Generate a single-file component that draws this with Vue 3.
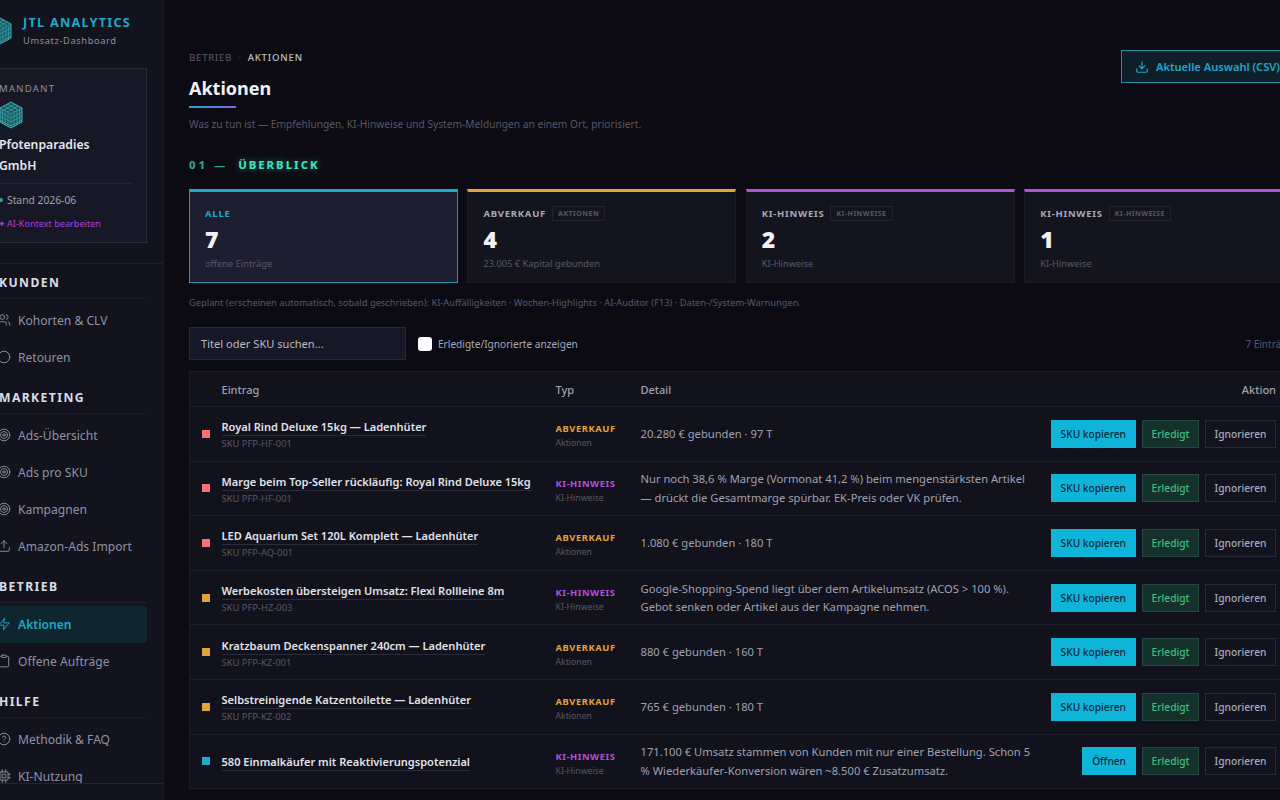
<script setup>
const groups = [
  { label: 'KUNDEN', items: [{ t: 'Kohorten & CLV', i: 'users' }, { t: 'Retouren', i: 'return' }] },
  { label: 'MARKETING', items: [{ t: 'Ads-Übersicht', i: 'target' }, { t: 'Ads pro SKU', i: 'target' }, { t: 'Kampagnen', i: 'target' }, { t: 'Amazon-Ads Import', i: 'upload' }] },
  { label: 'BETRIEB', items: [{ t: 'Aktionen', i: 'zap', active: true }, { t: 'Offene Aufträge', i: 'clip' }] },
  { label: 'HILFE', items: [{ t: 'Methodik & FAQ', i: 'help' }, { t: 'KI-Nutzung', i: 'cpu' }] },
]
const cards = [
  { label: 'ALLE', n: 7, sub: 'offene Einträge', cls: 'c-all' },
  { label: 'ABVERKAUF', tag: 'AKTIONEN', n: 4, sub: '23.005 € Kapital gebunden', cls: 'c-amber' },
  { label: 'KI-HINWEIS', tag: 'KI-HINWEISE', n: 2, sub: 'KI-Hinweise', cls: 'c-purple' },
  { label: 'KI-HINWEIS', tag: 'KI-HINWEISE', n: 1, sub: 'KI-Hinweise', cls: 'c-purple' },
]
const rows = [
  { dot: 'red', title: 'Royal Rind Deluxe 15kg — Ladenhüter', sku: 'SKU PFP-HF-001', type: 'ABVERKAUF', sub: 'Aktionen', detail: '20.280 € gebunden · 97 T', btn: 'SKU kopieren' },
  { dot: 'red', title: 'Marge beim Top-Seller rückläufig: Royal Rind Deluxe 15kg', sku: 'SKU PFP-HF-001', type: 'KI-HINWEIS', sub: 'KI-Hinweise', detail: 'Nur noch 38,6 % Marge (Vormonat 41,2 %) beim mengenstärksten Artikel — drückt die Gesamtmarge spürbar. EK-Preis oder VK prüfen.', btn: 'SKU kopieren' },
  { dot: 'red', title: 'LED Aquarium Set 120L Komplett — Ladenhüter', sku: 'SKU PFP-AQ-001', type: 'ABVERKAUF', sub: 'Aktionen', detail: '1.080 € gebunden · 180 T', btn: 'SKU kopieren' },
  { dot: 'amber', title: 'Werbekosten übersteigen Umsatz: Flexi Rollleine 8m', sku: 'SKU PFP-HZ-003', type: 'KI-HINWEIS', sub: 'KI-Hinweise', detail: 'Google-Shopping-Spend liegt über dem Artikelumsatz (ACOS > 100 %). Gebot senken oder Artikel aus der Kampagne nehmen.', btn: 'SKU kopieren' },
  { dot: 'amber', title: 'Kratzbaum Deckenspanner 240cm — Ladenhüter', sku: 'SKU PFP-KZ-001', type: 'ABVERKAUF', sub: 'Aktionen', detail: '880 € gebunden · 160 T', btn: 'SKU kopieren' },
  { dot: 'amber', title: 'Selbstreinigende Katzentoilette — Ladenhüter', sku: 'SKU PFP-KZ-002', type: 'ABVERKAUF', sub: 'Aktionen', detail: '765 € gebunden · 180 T', btn: 'SKU kopieren' },
  { dot: 'blue', title: '580 Einmalkäufer mit Reaktivierungspotenzial', sku: '', type: 'KI-HINWEIS', sub: 'KI-Hinweise', detail: '171.100 € Umsatz stammen von Kunden mit nur einer Bestellung. Schon 5 % Wiederkäufer-Konversion wären ~8.500 € Zusatzumsatz.', btn: 'Öffnen' },
]
</script>

<template>
  <div class="viewport">
    <div class="shell">
      <aside class="side">
        <div class="brand">
          <svg class="cube big" viewBox="0 0 24 28" fill="none" stroke="#3fb4b8" stroke-width="1">
            <path d="M12 1 23 7v14l-11 6-11-6V7z" fill="#1b5a63" />
            <path d="M1 7l11 6 11-6M12 13v14M3.500 8.500v14M6 10v14M9 11.500v14M15 11.500v14M18 10v14M20.500 8.500v14M1 11l11 6 11-6M1 15l11 6 11-6M1 19l11 6 11-6M5 5l11 6M8 3l11 6M19 5 8 11M16 3 5 9" stroke-width=".6" />
          </svg>
          <div>
            <div class="brand-t">JTL ANALYTICS</div>
            <div class="brand-s">Umsatz-Dashboard</div>
          </div>
        </div>
        <div class="tenant">
          <div class="tenant-l">MANDANT</div>
          <svg class="cube" viewBox="0 0 24 28" fill="none" stroke="#3fb4b8" stroke-width="1">
            <path d="M12 1 23 7v14l-11 6-11-6V7z" fill="#1b5a63" />
            <path d="M1 7l11 6 11-6M12 13v14M3.500 8.500v14M6 10v14M9 11.500v14M15 11.500v14M18 10v14M20.500 8.500v14M1 11l11 6 11-6M1 15l11 6 11-6M1 19l11 6 11-6M5 5l11 6M8 3l11 6M19 5 8 11M16 3 5 9" stroke-width=".6" />
          </svg>
          <div class="tenant-n">Pfotenparadies GmbH</div>
          <div class="tenant-hr"></div>
          <div class="tenant-st"><i class="pip"></i>Stand 2026-06</div>
          <div class="tenant-ai"><span class="spark">✦</span>AI-Kontext bearbeiten</div>
        </div>
        <div class="side-hr"></div>
        <nav class="nav">
          <section v-for="g in groups" :key="g.label" class="group">
            <div class="group-l">{{ g.label }}</div>
            <a v-for="it in g.items" :key="it.t" class="item" :class="{ active: it.active }">
              <svg class="ico" viewBox="0 0 24 24" fill="none" stroke="currentColor" stroke-width="1.6" stroke-linecap="round" stroke-linejoin="round">
                <template v-if="it.i === 'users'"><path d="M16 21v-2a4 4 0 0 0-4-4H6a4 4 0 0 0-4 4v2" /><circle cx="9" cy="7" r="4" /><path d="M22 21v-2a4 4 0 0 0-3-3.900M16 3.100a4 4 0 0 1 0 7.800" /></template>
                <template v-else-if="it.i === 'return'"><circle cx="12" cy="12" r="10" /></template>
                <template v-else-if="it.i === 'target'"><circle cx="12" cy="12" r="10" /><circle cx="12" cy="12" r="6" /><circle cx="12" cy="12" r="2" /></template>
                <template v-else-if="it.i === 'upload'"><path d="M21 15v4a2 2 0 0 1-2 2H5a2 2 0 0 1-2-2v-4M17 8l-5-5-5 5M12 3v12" /></template>
                <template v-else-if="it.i === 'zap'"><path d="M13 2 3 14h9l-1 8 10-12h-9z" /></template>
                <template v-else-if="it.i === 'clip'"><rect x="8" y="2" width="8" height="4" rx="1" /><path d="M16 4h2a2 2 0 0 1 2 2v14a2 2 0 0 1-2 2H6a2 2 0 0 1-2-2V6a2 2 0 0 1 2-2h2" /></template>
                <template v-else-if="it.i === 'help'"><circle cx="12" cy="12" r="10" /><path d="M9.100 9a3 3 0 0 1 5.800 1c0 2-3 3-3 3M12 17h.01" /></template>
                <template v-else><rect x="5" y="5" width="14" height="14" rx="2" /><rect x="9" y="9" width="6" height="6" /><path d="M9 1v4M15 1v4M9 19v4M15 19v4M19 9h4M19 15h4M1 9h4M1 15h4" /></template>
              </svg>
              <span>{{ it.t }}</span>
            </a>
          </section>
        </nav>
        <div class="side-foot"></div>
      </aside>

      <main class="main">
        <header class="head">
          <div>
            <div class="crumb"><span>BETRIEB</span><em>·</em><b>AKTIONEN</b></div>
            <h1>Aktionen</h1>
            <div class="h-bar"></div>
            <p class="lead">Was zu tun ist — Empfehlungen, KI-Hinweise und System-Meldungen an einem Ort, priorisiert.</p>
          </div>
          <button class="export">
            <svg viewBox="0 0 24 24" fill="none" stroke="currentColor" stroke-width="2" stroke-linecap="round" stroke-linejoin="round"><path d="M21 15v4a2 2 0 0 1-2 2H5a2 2 0 0 1-2-2v-4M7 10l5 5 5-5M12 15V3" /></svg>
            Aktuelle Auswahl (CSV)
          </button>
        </header>

        <h2 class="sec"><span>01 —</span> ÜBERBLICK</h2>

        <div class="cards">
          <div v-for="(c, idx) in cards" :key="idx" class="card" :class="c.cls">
            <div class="card-l">{{ c.label }}<span v-if="c.tag" class="tag">{{ c.tag }}</span></div>
            <div class="card-n">{{ c.n }}</div>
            <div class="card-s">{{ c.sub }}</div>
          </div>
        </div>

        <p class="plan">Geplant (erscheinen automatisch, sobald geschrieben): KI-Auffälligkeiten · Wochen-Highlights · AI-Auditor (F13) · Daten-/System-Warnungen.</p>

        <div class="filters">
          <div class="search">Titel oder SKU suchen...</div>
          <label class="chk"><i class="box"></i>Erledigte/Ignorierte anzeigen</label>
          <span class="count">7 Einträge</span>
        </div>

        <table class="tbl">
          <thead>
            <tr><th class="c0"></th><th class="c1">Eintrag</th><th class="c2">Typ</th><th class="c3">Detail</th><th class="c4">Aktion</th></tr>
          </thead>
          <tbody>
            <tr v-for="(r, idx) in rows" :key="idx">
              <td class="c0"><i class="dot" :class="r.dot"></i></td>
              <td class="c1">
                <span class="r-t">{{ r.title }}</span>
                <div v-if="r.sku" class="r-s sku">{{ r.sku }}</div>
              </td>
              <td class="c2">
                <div class="ty" :class="r.type === 'ABVERKAUF' ? 'amber' : 'purple'">{{ r.type }}</div>
                <div class="r-s">{{ r.sub }}</div>
              </td>
              <td class="c3"><div class="det">{{ r.detail }}</div></td>
              <td class="c4">
                <div class="acts">
                  <button class="b b-pri">{{ r.btn }}</button>
                  <button class="b b-ok">Erledigt</button>
                  <button class="b b-ign">Ignorieren</button>
                </div>
              </td>
            </tr>
          </tbody>
        </table>
      </main>
    </div>
  </div>
</template>

<style>
html, body { margin: 0; background: #0b0b12; }
</style>

<style scoped>
* { box-sizing: border-box; }
.viewport { width: 1280px; height: 800px; overflow: hidden; font-family: "Noto Sans", "Open Sans", sans-serif; color: #e8e8f0; background: #0c0b13; }
.shell { display: flex; height: 800px; margin-left: -16px; width: 1309px; }

.side { flex: 0 0 180px; height: 800px; background: #12131d; border-right: 1px solid #1b1c28; display: flex; flex-direction: column; }
.brand { display: flex; align-items: center; gap: 11px; height: 63px; padding: 0 0 0 4px; margin-bottom: 5px; }
.cube { display: block; width: 24px; height: 28px; }
.cube.big { flex: none; margin-top: -2px; }
.brand-t { font-size: 12.7px; font-weight: 700; letter-spacing: 1.25px; color: #1fa8c8; line-height: 16px; margin-top: -1px; }
.brand-s { font-size: 9.3px; letter-spacing: .6px; color: #8f90a2; line-height: 14px; margin-top: 4px; }
.tenant { width: 163px; height: 175px; border: 1px solid #2a2b3a; background: #171825; padding: 13px 14px 0; }
.tenant-l { font-size: 9.5px; letter-spacing: 1.3px; color: #8f90a2; line-height: 13px; margin-bottom: 6px; }
.tenant-n { font-size: 12.2px; font-weight: 600; line-height: 21px; color: #e6e6ee; margin-top: 5px; width: 120px; }
.tenant-hr { height: 1px; background: #232433; margin-top: 7px; }
.tenant-st { display: flex; align-items: center; font-size: 10.3px; color: #a0a1b2; margin-top: 8px; line-height: 16px; gap: 4px; }
.pip { width: 4px; height: 4px; border-radius: 50%; background: #27a98a; }
.tenant-ai { font-size: 9.1px; color: #a93fd6; margin-top: 9px; line-height: 14px; display: flex; gap: 1px; margin-left: -1px; }
.spark { font-size: 9px; }
.side-hr { height: 1px; background: #1e1f2c; margin-top: 20px; }
.nav { flex: 1; overflow: hidden; padding-top: 10px; }
.group { margin-bottom: 13.600px; }
.group-l { width: 163px; padding-left: 15px; font-size: 12.2px; font-weight: 700; letter-spacing: 1.4px; line-height: 18px; color: #dcdce6; height: 25px; border-bottom: 1px solid #1d1e2b; margin-bottom: 2.500px; }
.item { display: flex; align-items: center; gap: 7px; width: 163px; height: 37px; padding-left: 13px; font-size: 12.1px; color: #8f92a5; }
.item.active { background: #10262f; color: #1fa8c8; font-weight: 600; border-radius: 3px; }
.ico { flex: none; width: 14px; height: 14px; }
.side-foot { height: 17px; border-top: 1px solid #232433; flex: none; }

.main { flex: 1; padding: 0 0 0 25px; min-width: 0; }
.head { display: flex; justify-content: space-between; align-items: flex-start; padding-top: 50px; }
.crumb { font-size: 9.5px; letter-spacing: .85px; line-height: 14px; color: #5a5b6c; display: flex; gap: 6px; padding-top: 1px; }
.crumb em { font-style: normal; color: #3a3b48; }
.crumb b { font-weight: 500; color: #bfc0cc; }
h1 { margin: 10px 0 0; font-size: 18px; font-weight: 700; line-height: 26px; color: #f0f0f5; }
.h-bar { width: 47px; height: 2px; margin-top: 5px; background: linear-gradient(90deg, #1fa8c8, #8b5cf6); }
.lead { margin: 8px 0 0; font-size: 10.2px; line-height: 16px; color: #565766; }
.export { display: flex; align-items: center; gap: 7px; height: 33px; width: 172px; padding: 0 0 0 13px; background: #0f1f2a; border: 1px solid #2590ad; color: #1fa8c8; font: 600 11.1px "Noto Sans", sans-serif; white-space: nowrap; }
.export svg { width: 14px; height: 14px; }
.sec { margin: 25px 0 0; font-size: 11.3px; font-weight: 800; letter-spacing: 2px; line-height: 16px; color: #3fe0bd; text-shadow: 0 0 8px rgba(63, 224, 189, .45); }
.sec span { color: #2aa58d; margin-right: 5px; letter-spacing: 3px; text-shadow: none; }

.cards { display: grid; grid-template-columns: repeat(4, 1fr); gap: 9.5px; margin-top: 16px; }
.card { height: 94px; background: #13141e; border: 1px solid #1b1c28; border-top-width: 3px; padding: 13px 15px 0 15px; }
.c-all { background: #1d1e30; border-color: #2a90ab; border-top-color: #1fa8c8; }
.c-amber { border-top-color: #e3a23b; }
.c-purple { border-top-color: #b44fd8; }
.card-l { display: flex; align-items: center; height: 16px; font-size: 9.5px; font-weight: 700; letter-spacing: .75px; color: #a8a9b8; }
.c-all .card-l { color: #1fa8c8; }
.tag { margin-left: 6px; border: 1px solid #222331; padding: 0 5px; font-size: 7px; line-height: 13px; letter-spacing: .5px; color: #565766; }
.card-n { font-size: 23px; font-weight: 900; line-height: 30px; color: #f0f0f5; margin-top: 3px; }
.card-s { font-size: 9.3px; line-height: 14px; color: #565766; margin-top: 3px; }
.plan { margin: 13px 0 0; font-size: 9.3px; line-height: 14px; color: #565766; }

.filters { display: flex; align-items: center; margin-top: 17px; height: 33px; }
.search { width: 217px; height: 33px; background: #171825; border: 1px solid #262736; padding-left: 11px; font-size: 11.1px; line-height: 32px; color: #b9bac6; }
.chk { display: flex; align-items: center; gap: 6px; margin-left: 12px; font-size: 10.1px; color: #a8a9b8; }
.box { width: 14px; height: 14px; border-radius: 3px; background: #fff; }
.count { margin-left: auto; font-size: 10px; color: #565766; }

.tbl { width: 100%; margin-top: 11px; border-collapse: collapse; table-layout: fixed; background: #11121c; border: 1px solid #1b1c28; }
th { height: 35px; text-align: left; font-size: 11px; font-weight: 500; color: #a0a1b0; padding: 0; border-bottom: 1px solid #1e1f2c; }
td { height: 54.6px; padding: 0; border-bottom: 1px solid #1e1f2c; vertical-align: middle; }
.c0 { width: 32px; padding-left: 12px; }
.c1 { width: 334px; }
td.c1 { padding-bottom: 3px; }
.c2 { width: 85px; }
td.c2 { padding-top: 5px; }
.c3 { width: 410px; }
th.c4 { text-align: right; padding-right: 16px; }
.c4 { padding-right: 16px; }
.dot { display: block; width: 8px; height: 8px; }
.dot.red { background: #fb6f78; }
.dot.amber { background: #e3a23b; }
.dot.blue { background: #1fa8c8; }
.r-t { font-size: 11.05px; font-weight: 600; line-height: 15px; color: #e2e2ea; border-bottom: 1px solid #2a2b3a; padding-bottom: 1px; display: inline-block; }
.r-s { font-size: 8.7px; line-height: 13px; color: #565766; margin-top: 2px; }
.r-s.sku { font-size: 9.4px; margin-top: 1px; }
.ty { font-size: 9.4px; font-weight: 700; letter-spacing: .55px; line-height: 13px; }
.ty.amber { color: #e3a23b; }
.ty.purple { color: #b44fd8; }
.det { font-size: 11.2px; line-height: 18.5px; color: #a0a1b0; width: 390px; padding-top: 1px; }
.acts { display: flex; justify-content: flex-end; gap: 6px; }
.b { height: 28px; padding: 0; font: 500 10.2px "Noto Sans", sans-serif; border: 1px solid; }
.b-pri { background: #0fb5d8; border-color: #0fb5d8; color: #0b2a3a; padding: 0 9px; }
.b-ok { width: 57px; background: #14312c; border-color: #25473f; color: #3fbf7f; }
.b-ign { width: 71px; background: #12131d; border-color: #2a2b3a; color: #a8a9b8; }
</style>
